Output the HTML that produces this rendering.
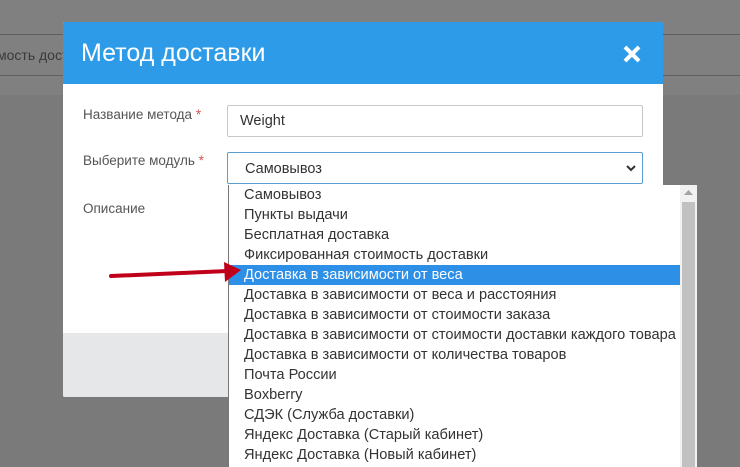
<!DOCTYPE html>
<html><head><meta charset="utf-8"><style>
*{margin:0;padding:0;box-sizing:border-box}
html,body{width:740px;height:467px;overflow:hidden}
body{background:#7a7a7a;font-family:"Liberation Sans","DejaVu Sans",sans-serif;position:relative}
.top{position:absolute;left:0;top:0;width:740px;height:95px;background:#808080}
.l{position:absolute;left:0;width:740px;height:1px;background:#5f5f5f}
.bgt{position:absolute;left:-3px;top:47px;font-size:14px;color:#3a3a3a}
.modal{position:absolute;left:63px;top:22px;width:600px;height:375px;background:#fff;border-radius:2px;overflow:hidden}
.hd{height:62px;background:#2e9be8;color:#fff;font-size:25px;padding:17px 0 0 18px;position:relative}
.x{position:absolute;right:21px;top:22px}
.ft{position:absolute;left:0;top:311px;width:600px;height:64px;background:#e6e7e9}
.lab{position:absolute;font-size:13.5px;color:#555}
.lab b{color:#d9534f;font-weight:normal}
.in{position:absolute;left:164px;width:416px;height:32px;border:1px solid #c8c8c8;border-radius:2px;font-size:14.5px;color:#333;padding:7px 12px}
.sel{border-color:#5a9fd0;padding:8px 17px}
.dd{position:absolute;left:228px;top:185px;width:469px;height:282px;background:#fff;border-left:1px solid #777;overflow:hidden}
.it{height:20px;line-height:20px;font-size:14.6px;color:#333;padding-left:15px;white-space:nowrap;width:452px;overflow:hidden}
.hl{background:#2e8fe6;color:#fff}
.sb{position:absolute;right:0;top:0;width:17px;height:282px;background:#f1f1f1}
.th{position:absolute;left:2px;top:17px;width:13px;height:270px;background:#c1c1c1}
</style></head><body>
<div class="top"><div class="l" style="top:34px"></div><div class="l" style="top:75px"></div><div class="bgt">мость дост</div></div>
<div class="modal">
<div class="hd">Метод доставки<svg class="x" width="20" height="20" viewBox="0 0 20 20"><path d="M3 3L17 17M17 3L3 17" stroke="#fff" stroke-width="4"/></svg></div>
<div class="lab" style="left:20px;top:85px">Название метода <b>*</b></div>
<div class="lab" style="left:20px;top:131px">Выберите модуль <b>*</b></div>
<div class="lab" style="left:20px;top:179px">Описание</div>
<div class="in" style="top:83px">Weight</div>
<div class="in sel" style="top:130px">Самовывоз<svg style="position:absolute;right:6px;top:12px" width="10" height="7" viewBox="0 0 10 7"><path d="M1 1L5 5L9 1" stroke="#333" stroke-width="2" fill="none"/></svg></div>
<div class="ft"></div>
</div>
<div class="dd">
<div class="it">Самовывоз</div>
<div class="it">Пункты выдачи</div>
<div class="it">Бесплатная доставка</div>
<div class="it">Фиксированная стоимость доставки</div>
<div class="it hl">Доставка в зависимости от веса</div>
<div class="it">Доставка в зависимости от веса и расстояния</div>
<div class="it">Доставка в зависимости от стоимости заказа</div>
<div class="it">Доставка в зависимости от стоимости доставки каждого товара</div>
<div class="it">Доставка в зависимости от количества товаров</div>
<div class="it">Почта России</div>
<div class="it">Boxberry</div>
<div class="it">СДЭК (Служба доставки)</div>
<div class="it">Яндекс Доставка (Старый кабинет)</div>
<div class="it">Яндекс Доставка (Новый кабинет)</div>
<div class="sb"><svg style="position:absolute;left:4px;top:4px" width="9" height="6"><path d="M0 6L4.5 1L9 6Z" fill="#a3a3a3"/></svg><div class="th"></div></div>
</div>
<svg style="position:absolute;left:0;top:0" width="740" height="467"><path d="M111 276L228 271" stroke="#c0001a" stroke-width="4" stroke-linecap="round"/><path d="M224 262L241 270L225 282Z" fill="#c0001a"/></svg>
</body></html>
